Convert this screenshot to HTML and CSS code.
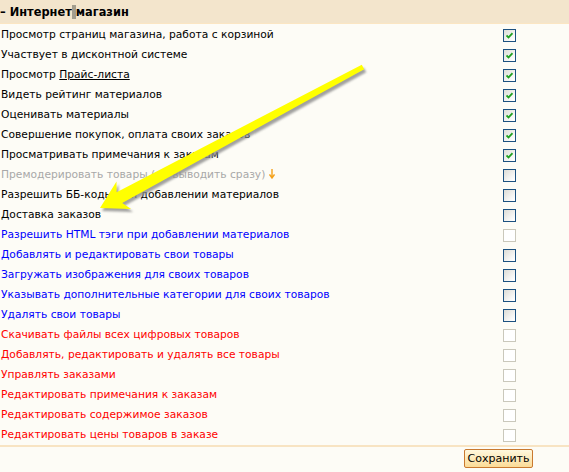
FILE: index.html
```html
<!DOCTYPE html>
<html>
<head>
<meta charset="utf-8">
<link rel="stylesheet" href="styles.css">
</head>
<body>
<div class="page">
  <div class="head">– Интернет<span class="sel"> </span>магазин</div>
  <div class="rows">
    <div class="row"><span class="lbl">Просмотр страниц магазина, работа с корзиной</span><span class="cb on"></span></div>
    <div class="row"><span class="lbl">Участвует в дисконтной системе</span><span class="cb on"></span></div>
    <div class="row"><span class="lbl">Просмотр <u>Прайс-листа</u></span><span class="cb on"></span></div>
    <div class="row"><span class="lbl">Видеть рейтинг материалов</span><span class="cb on"></span></div>
    <div class="row"><span class="lbl">Оценивать материалы</span><span class="cb on"></span></div>
    <div class="row"><span class="lbl">Совершение покупок, оплата своих заказов</span><span class="cb on"></span></div>
    <div class="row"><span class="lbl">Просматривать примечания к заказам</span><span class="cb on"></span></div>
    <div class="row"><span class="lbl grey">Премодерировать товары (не выводить сразу)<svg class="dn" width="6" height="10" viewBox="0 0 6 10"><path d="M3 0V8M0.5 5.5L3 9L5.5 5.5" fill="none" stroke="#f4a21c" stroke-width="1.4"/></svg></span><span class="cb"></span></div>
    <div class="row"><span class="lbl">Разрешить ББ-коды при добавлении материалов</span><span class="cb"></span></div>
    <div class="row"><span class="lbl">Доставка заказов</span><span class="cb"></span></div>
    <div class="row"><span class="lbl blue">Разрешить HTML тэги при добавлении материалов</span><span class="cb dis"></span></div>
    <div class="row"><span class="lbl blue">Добавлять и редактировать свои товары</span><span class="cb"></span></div>
    <div class="row"><span class="lbl blue">Загружать изображения для своих товаров</span><span class="cb"></span></div>
    <div class="row"><span class="lbl blue">Указывать дополнительные категории для своих товаров</span><span class="cb"></span></div>
    <div class="row"><span class="lbl blue">Удалять свои товары</span><span class="cb"></span></div>
    <div class="row"><span class="lbl red">Скачивать файлы всех цифровых товаров</span><span class="cb dis"></span></div>
    <div class="row"><span class="lbl red">Добавлять, редактировать и удалять все товары</span><span class="cb dis"></span></div>
    <div class="row"><span class="lbl red">Управлять заказами</span><span class="cb dis"></span></div>
    <div class="row"><span class="lbl red">Редактировать примечания к заказам</span><span class="cb dis"></span></div>
    <div class="row"><span class="lbl red">Редактировать содержимое заказов</span><span class="cb dis"></span></div>
    <div class="row"><span class="lbl red">Редактировать цены товаров в заказе</span><span class="cb dis"></span></div>
  </div>
  <div class="foot"><button class="btn">Сохранить</button></div>
  <svg class="arrow" width="569" height="472" viewBox="0 0 569 472">
    <defs>
      <filter id="sh" x="-10%" y="-10%" width="130%" height="130%">
        <feGaussianBlur stdDeviation="1.2"/>
      </filter>
    </defs>
    <polygon transform="translate(2,3)" filter="url(#sh)" fill="#8a8a8a" opacity="0.8" points="100,208 131.1,208.9 122.2,202.9 364.2,69.2 361.8,64.8 116.6,192.3 116.5,181.5"/>
    <polygon fill="#ffff00" points="100,208 131.1,208.9 122.2,202.9 364.2,69.2 361.8,64.8 116.6,192.3 116.5,181.5"/>
  </svg>
</div>
</body>
</html>
```
FILE: styles.css
```css
html, body {
  margin: 0;
  padding: 0;
  background: #fdfcf6;
}
.page {
  position: relative;
  width: 569px;
  height: 472px;
  font-family: "DejaVu Sans", Tahoma, sans-serif;
  font-size: 10.7px;
  color: #000;
}
.head {
  height: 23px;
  line-height: 24px;
  background: #f3e5cc;
  border-bottom: 1px solid #fbe6c3;
  font-weight: bold;
  font-size: 11.4px;
  padding-left: 0;
}
.sel {
  background: #a29d8e;
}
.rows {
  padding-top: 1px;
}
.row {
  display: grid;
  grid-template-columns: 503px 13px;
  height: 20px;
  align-items: center;
}
.lbl {
  padding-left: 1px;
  white-space: nowrap;
  line-height: 20px;
}
.grey { color: #a8a8a8; }
.blue { color: #0000ff; }
.red { color: #ff0000; }
.dn {
  margin-left: 4px;
  vertical-align: -1px;
}
.cb {
  display: block;
  width: 11px;
  height: 11px;
  border: 1px solid #1c5180;
  background: linear-gradient(135deg, #dcdcd6 0%, #ffffff 90%);
  position: relative;
}
.cb.on::after {
  content: "";
  position: absolute;
  left: 2px;
  top: 2px;
  width: 7px;
  height: 7px;
  background: no-repeat center/7px 7px url("data:image/svg+xml;utf8,<svg xmlns='http://www.w3.org/2000/svg' width='7' height='7' viewBox='0 0 7 7'><path d='M0.5 3.5L2.5 5.5L6.5 1.2' fill='none' stroke='%2321a121' stroke-width='1.8'/></svg>");
}
.cb.dis {
  border-color: #cac8bb;
  background: #ffffff;
}
.foot {
  margin-top: 0;
  border-top: 2px solid #f8e4c3;
  display: flex;
  justify-content: flex-end;
  padding-top: 2px;
  padding-right: 36px;
}
.btn {
  font-family: "DejaVu Sans", Tahoma, sans-serif;
  font-size: 11px;
  width: 69px;
  height: 19px;
  padding: 0;
  border: 1px solid #c9792f;
  border-radius: 2px;
  background: linear-gradient(#fff8de, #fbdb97);
  color: #000;
}
.arrow {
  position: absolute;
  left: 0;
  top: 0;
  pointer-events: none;
}
```
